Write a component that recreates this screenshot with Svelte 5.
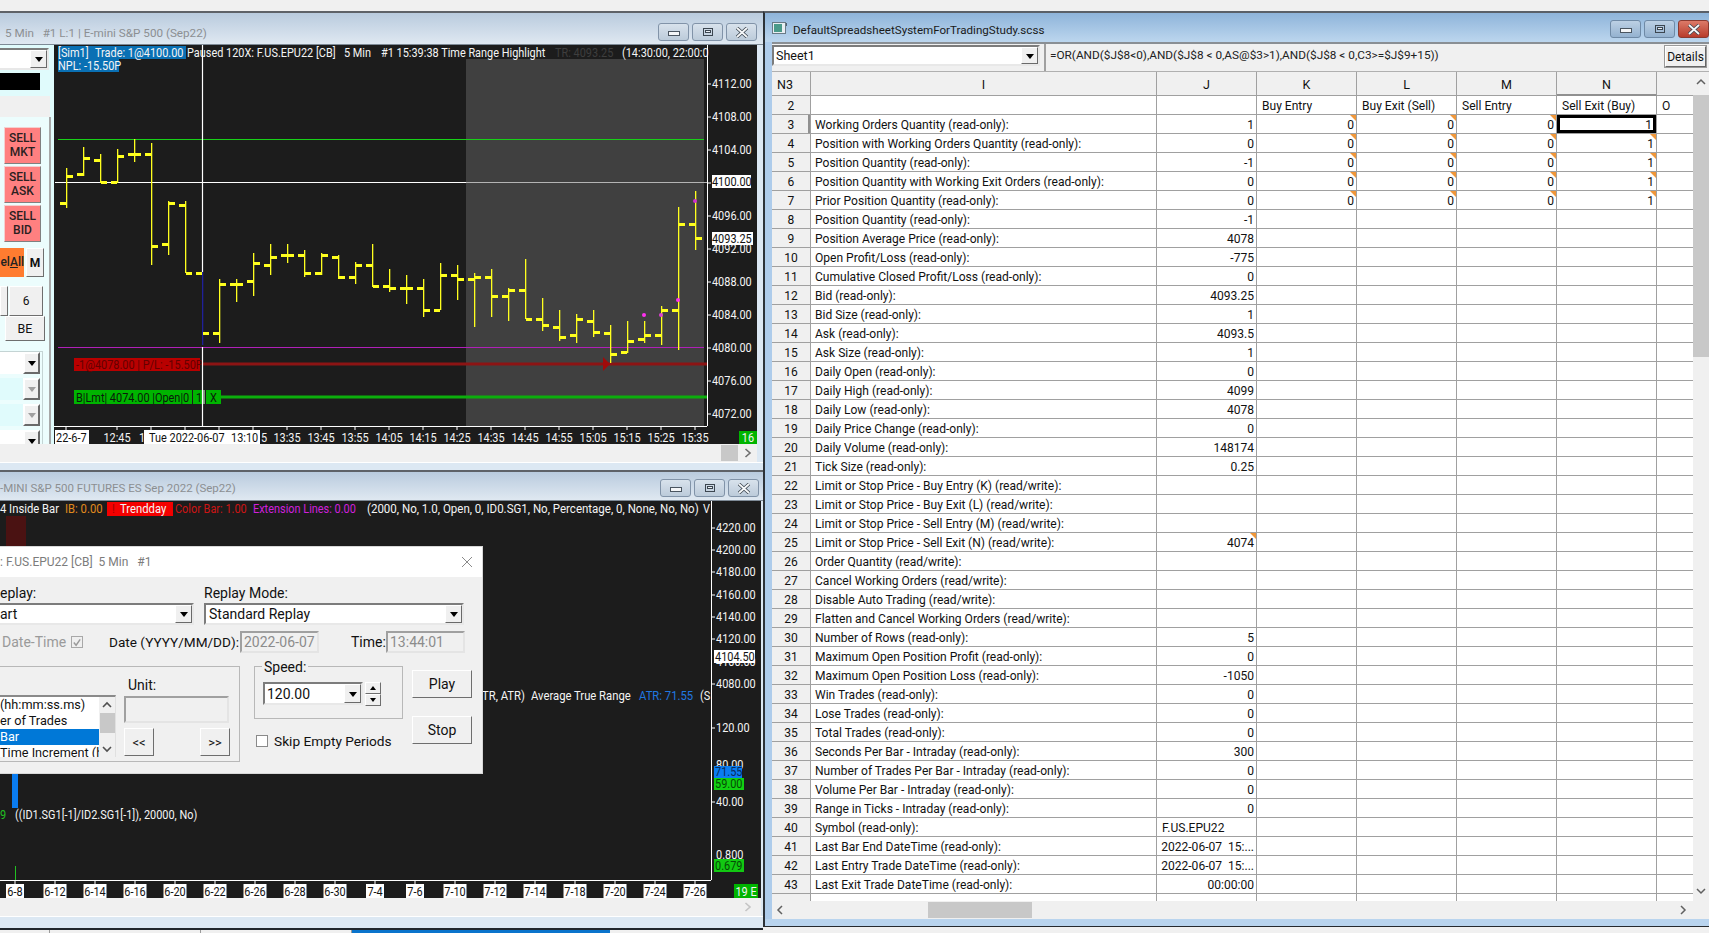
<script>
  // [high y, low y, open tick y, close tick y], page pixel coords, 17px per bar from x=66
  const bars = [
    [168, 208, 203, 176], [147, 176, 174, 158], [154, 183, 160, 182], [149, 183, 182, 156],
    [139, 162, 154, 154], [143, 265, 154, 246], [201, 255, 244, 203], [201, 273, 205, 273],
    [272, 345, 273, 333], [279, 343, 333, 284], [279, 302, 284, 284], [253, 296, 281, 263],
    [244, 275, 265, 257], [244, 263, 255, 255], [250, 277, 255, 273], [253, 275, 273, 255],
    [255, 279, 257, 277], [262, 284, 277, 265], [244, 287, 265, 286], [269, 292, 286, 288],
    [275, 304, 288, 288], [279, 317, 288, 310], [263, 310, 310, 275], [265, 300, 275, 279],
    [273, 327, 279, 277], [269, 317, 277, 296], [288, 321, 296, 290], [259, 319, 290, 319],
    [298, 331, 319, 325], [310, 341, 327, 337], [314, 343, 335, 319], [310, 337, 321, 332],
    [325, 363, 333, 354], [321, 353, 352, 341], [321, 343, 339, 335], [306, 345, 335, 310],
    [207, 350, 310, 224], [191, 250, 224, 238]
  ];
  const barX = (i) => 66 + 17 * i;

  const prices = [
    ["4112.00", 84], ["4108.00", 117], ["4104.00", 150], ["4096.00", 216], ["4092.00", 249],
    ["4088.00", 282], ["4084.00", 315], ["4080.00", 348], ["4076.00", 381], ["4072.00", 414]
  ];
  const times = [
    ["13:35", 287], ["13:45", 321], ["13:55", 355], ["14:05", 389], ["14:15", 423], ["14:25", 457],
    ["14:35", 491], ["14:45", 525], ["14:55", 559], ["15:05", 593], ["15:15", 627], ["15:25", 661], ["15:35", 695]
  ];
  const timeTicks = [66, 117, 151, 185, 219, 253, ...times.map((t) => t[1])];

  const prices2 = [
    ["4220.00", 528], ["4200.00", 550], ["4180.00", 572], ["4160.00", 595], ["4140.00", 617],
    ["4120.00", 639], ["4080.00", 684], ["120.00", 728], ["40.00", 802]
  ];
  const dates = ["6-8", "6-12", "6-14", "6-16", "6-20", "6-22", "6-26", "6-28", "6-30", "7-4", "7-6", "7-10", "7-12", "7-14", "7-18", "7-20", "7-24", "7-26"];

  const ro = " (read-only):";
  const rw = " (read/write):";
  const rows = [
    [3, "Working Orders Quantity" + ro, "1"], [4, "Position with Working Orders Quantity" + ro, "0"],
    [5, "Position Quantity" + ro, "-1"], [6, "Position Quantity with Working Exit Orders" + ro, "0"],
    [7, "Prior Position Quantity" + ro, "0"], [8, "Position Quantity" + ro, "-1"],
    [9, "Position Average Price" + ro, "4078"], [10, "Open Profit/Loss" + ro, "-775"],
    [11, "Cumulative Closed Profit/Loss" + ro, "0"], [12, "Bid" + ro, "4093.25"],
    [13, "Bid Size" + ro, "1"], [14, "Ask" + ro, "4093.5"], [15, "Ask Size" + ro, "1"],
    [16, "Daily Open" + ro, "0"], [17, "Daily High" + ro, "4099"], [18, "Daily Low" + ro, "4078"],
    [19, "Daily Price Change" + ro, "0"], [20, "Daily Volume" + ro, "148174"], [21, "Tick Size" + ro, "0.25"],
    [22, "Limit or Stop Price - Buy Entry (K)" + rw, ""], [23, "Limit or Stop Price - Buy Exit (L)" + rw, ""],
    [24, "Limit or Stop Price - Sell Entry (M)" + rw, ""], [25, "Limit or Stop Price - Sell Exit (N)" + rw, "4074"],
    [26, "Order Quantity" + rw, ""], [27, "Cancel Working Orders" + rw, ""], [28, "Disable Auto Trading" + rw, ""],
    [29, "Flatten and Cancel Working Orders" + rw, ""], [30, "Number of Rows" + ro, "5"],
    [31, "Maximum Open Position Profit" + ro, "0"], [32, "Maximum Open Position Loss" + ro, "-1050"],
    [33, "Win Trades" + ro, "0"], [34, "Lose Trades" + ro, "0"], [35, "Total Trades" + ro, "0"],
    [36, "Seconds Per Bar - Intraday" + ro, "300"], [37, "Number of Trades Per Bar - Intraday" + ro, "0"],
    [38, "Volume Per Bar - Intraday" + ro, "0"], [39, "Range in Ticks - Intraday" + ro, "0"],
    [40, "Symbol" + ro, "F.US.EPU22"], [41, "Last Bar End DateTime" + ro, "2022-06-07  15:..."],
    [42, "Last Entry Trade DateTime" + ro, "2022-06-07  15:..."], [43, "Last Exit Trade DateTime" + ro, "00:00:00"],
    ["", "", ""]
  ];
</script>

{#snippet winButtons(active)}
  <div class="winbtns">
    <span class="wb"><svg width="14" height="10" viewBox="0 0 14 10"><rect x="1.5" y="4.5" width="11" height="4" fill="#f4f6f8" stroke="#4a5560"/></svg></span>
    <span class="wb"><svg width="14" height="10" viewBox="0 0 14 10"><rect x="2.5" y="1.5" width="9" height="7" fill="none" stroke="#3c4650"/><rect x="4.5" y="3.5" width="5" height="2" fill="#eef2f6" stroke="#3c4650"/></svg></span>
    <span class="wb" class:red={active}><svg width="14" height="11" viewBox="0 0 14 11"><path d="M2 1 L12 10 M12 1 L2 10" stroke="#3c4650" stroke-width="3.4"/><path d="M2 1 L12 10 M12 1 L2 10" stroke="#f6f8fa" stroke-width="1.8"/></svg></span>
  </div>
{/snippet}

{#snippet combo(text, cls = "", disabled = false)}
  <div class="combo {cls}">
    <span class="combo-text">{text}</span>
    <i class="arrow" class:off={disabled}></i>
  </div>
{/snippet}

<div class="desk">
  <div class="strip"></div>
  <div class="main">
    <div class="leftcol">
      <!-- intraday chart -->
      <section class="win win1">
        <header class="title">
          <span class="title-text">5 Min&nbsp;&nbsp; #1 L:1 | E-mini S&amp;P 500 (Sep22)</span>
          {@render winButtons(false)}
        </header>
        <div class="win1-body">
          <aside class="panel">
            {@render combo("", "p-top")}
            <div class="blackbar"></div>
            <div class="graybar"></div>
            <div class="tradebox">
              <div class="sell">SELL<br />MKT</div>
              <div class="sell">SELL<br />ASK</div>
              <div class="sell">SELL<br />BID</div>
              <div class="btnrow1">
                <div class="cancel">el<u>A</u>ll</div>
                <div class="bevel m">M</div>
              </div>
              <div class="btnrow2">
                <div class="bevel stub"></div>
                <div class="bevel six">6</div>
              </div>
              <div class="bevel be">BE</div>
              <div class="combos">
                {@render combo("", "p-c white")}
                {@render combo("", "p-c", true)}
                {@render combo("", "p-c", true)}
                {@render combo("", "p-c white")}
              </div>
            </div>
          </aside>
          <svg class="chart" width="703" height="399" viewBox="54 45 703 399">
            <rect x="54" y="45" width="703" height="399" fill="#1c1c1c" />
            <rect x="466" y="59" width="238" height="367" fill="#404040" />

            <line x1="58" x2="704" y1="139.5" y2="139.5" stroke="#18d018" />
            <line x1="55" x2="466" y1="182.5" y2="182.5" stroke="#fff" />
            <line x1="466" x2="707" y1="182.5" y2="182.5" stroke="#b4b4b4" />
            <line x1="58" x2="704" y1="347.5" y2="347.5" stroke="#b020b8" />
            <line x1="202" x2="707" y1="364" y2="364" stroke="#8c1414" stroke-width="3" />
            <line x1="221" x2="707" y1="397" y2="397" stroke="#0cae0c" stroke-width="3" />

            {#each bars as b, i}
              {@const x = barX(i)}
              <g fill={i === 8 ? "#20209a" : "#ffff1e"}>
                <rect x={x} y={b[0]} width="1.3" height={b[1] - b[0]} />
              </g>
              <g fill="#ffff1e">
                <rect x={x - 6} y={b[2] - 1} width="6" height="3" />
                <rect x={x + 1} y={b[3] - 1} width="6" height="3" />
              </g>
            {/each}

            <circle cx="695" cy="201" r="2" fill="#d030d0" />
            <circle cx="678" cy="300" r="2" fill="#ff30f0" />
            <circle cx="644" cy="315" r="2" fill="#ff30f0" />
            <circle cx="661" cy="315" r="2" fill="#e040d0" />
            <path d="M603 357 L610 364 L603 371 Z" fill="#a00a0a" />

            <!-- order labels -->
            <rect x="74" y="358" width="126" height="13" fill="#b80000" />
            <text x="76" y="369" class="t" style="fill:#640000">-1@4078.00 | P/L: -15.50P</text>
            <rect x="74" y="390" width="147" height="14" fill="#00b400" />
            <text x="76" y="402" class="t" style="fill:#0a1a0a">B|Lmt| 4074.00 |Open|0</text>
            <rect x="192" y="390" width="1" height="14" fill="#1c1c1c" />
            <rect x="202" y="390" width="3" height="14" fill="#7a9a7a" />
            <rect x="205" y="390" width="1" height="14" fill="#1c1c1c" />
            <text x="196" y="402" class="t" style="fill:#0a1a0a">1</text>
            <text x="210" y="402" class="t" style="fill:#0a1a0a">X</text>

            <!-- header texts -->
            <rect x="58" y="46" width="128" height="13" fill="#0a70b4" />
            <rect x="58" y="59" width="61" height="13" fill="#0a70b4" />
            <text x="58" y="57" class="t">[Sim1]</text>
            <text x="95" y="57" class="t">Trade: 1@4100.00</text>
            <text x="58" y="70" class="t">NPL: -15.50P</text>
            <text x="187" y="57" class="t">Paused 120X: F.US.EPU22 [CB]</text>
            <text x="344" y="57" class="t">5 Min</text>
            <text x="381" y="57" class="t">#1 15:39:38 Time Range Highlight</text>
            <text x="555" y="57" class="t" style="fill:#3e3e3e">TR: 4093.25</text>
            <text x="622" y="57" class="t">(14:30:00, 22:00:0</text>

            <line x1="202.5" x2="202.5" y1="45" y2="272" stroke="#fff" stroke-width="1.2" />
            <line x1="202.5" x2="202.5" y1="347" y2="426" stroke="#fff" stroke-width="1.2" />

            <!-- price axis -->
            <line x1="707.5" x2="707.5" y1="45" y2="426" stroke="#fff" />
            {#each prices as p}
              <line x1="707" x2="711" y1={p[1]} y2={p[1]} stroke="#fff" />
              <text x="712" y={p[1] + 4.5} class="t">{p[0]}</text>
            {/each}
            <line x1="707" x2="711" y1="183" y2="183" stroke="#fff" />
            <rect x="712" y="175" width="39" height="13" fill="#fff" />
            <text x="712" y="186" class="t dark">4100.00</text>
            <rect x="712" y="232" width="41" height="13" fill="#fff" />
            <text x="712" y="243" class="t dark">4093.25</text>

            <!-- time axis -->
            <line x1="54" x2="707" y1="426.5" y2="426.5" stroke="#fff" />
            {#each timeTicks as x}
              <line x1={x} x2={x} y1="426" y2="430" stroke="#fff" />
            {/each}
            <rect x="55" y="430" width="34" height="14" fill="#fff" />
            <text x="56" y="442" class="t dark">22-6-7</text>
            <text x="117" y="442" class="t c" text-anchor="middle">12:45</text>
            <text x="139" y="442" class="t">1</text>
            <text x="261" y="442" class="t">5</text>
            <rect x="144" y="430" width="116" height="14" fill="#fff" />
            <text x="149" y="442" class="t dark">Tue 2022-06-07</text>
            <text x="231" y="442" class="t dark">13:10</text>
            {#each times as t}
              <text x={t[1]} y="442" class="t c" text-anchor="middle">{t[0]}</text>
            {/each}
            <rect x="739" y="431" width="18" height="13" fill="#00b400" />
            <text x="748" y="442" class="t c" text-anchor="middle">16</text>
          </svg>
        </div>
        <div class="hscroll s1">
          <span class="thumb1"></span>
          <svg class="chev" width="8" height="10" viewBox="0 0 8 10"><path d="M1.5 1 L6 5 L1.5 9" fill="none" stroke="#707070" stroke-width="1.6" /></svg>
        </div>
        <div class="frame-bottom"></div>
      </section>

      <!-- daily chart with replay dialog on top -->
      <section class="win win2">
        <header class="title t2">
          <span class="title-text">-MINI S&amp;P 500 FUTURES ES Sep 2022 (Sep22)</span>
          {@render winButtons(false)}
        </header>
        <svg class="chart" width="761" height="397" viewBox="0 501 761 397">
          <rect x="0" y="501" width="761" height="397" fill="#1c1c1c" />
          <rect x="6" y="516" width="20" height="30" fill="#4a1212" />
          <rect x="12" y="773" width="6" height="35" fill="#0a7cf0" />
          <line x1="15.5" x2="15.5" y1="866" y2="880" stroke="#22c022" />

          <text x="0" y="513" class="t h94">4 Inside Bar</text>
          <text x="65" y="513" class="t h94" style="fill:#e08a1c">IB: 0.00</text>
          <rect x="107" y="502" width="66" height="14" fill="#f40000" />
          <text x="112" y="513" class="t" style="fill:#a00000">!</text>
          <text x="120" y="513" class="t h94">Trendday</text>
          <text x="175" y="513" class="t" style="fill:#cc1414">Color Bar: 1.00</text>
          <text x="253" y="513" class="t" style="fill:#d020dc">Extension Lines: 0.00</text>
          <text x="367" y="513" class="t h96">(2000, No, 1.0, Open, 0, ID0.SG1, No, Percentage, 0, None, No, No)</text>
          <text x="703" y="513" class="t">V</text>

          <text x="482" y="700" class="t h94">TR, ATR)</text>
          <text x="531" y="700" class="t h94">Average True Range</text>
          <text x="639" y="700" class="t h94" style="fill:#2078e0">ATR: 71.55</text>
          <text x="700" y="700" class="t">(S</text>
          <text x="0" y="819" class="t" style="fill:#22c022">9</text>
          <text x="15" y="819" class="t">((ID1.SG1[-1]/ID2.SG1[-1]), 20000, No)</text>

          <line x1="711.5" x2="711.5" y1="501" y2="880" stroke="#fff" />
          <line x1="0" x2="711" y1="880.5" y2="880.5" stroke="#fff" />
          {#each prices2 as p}
            <line x1="711" x2="715" y1={p[1]} y2={p[1]} stroke="#fff" />
            <text x="716" y={p[1] + 4.5} class="t">{p[0]}</text>
          {/each}
          <text x="716" y="666" class="t">4100.00</text>
          <rect x="714" y="650" width="41" height="13" fill="#fff" />
          <text x="715" y="661" class="t dark">4104.50</text>

          <text x="716" y="769" class="t">80.00</text>
          <rect x="714" y="766" width="28" height="12" fill="#0a7cf0" />
          <text x="715" y="776" class="t" style="fill:#0a2a5a">71.55</text>
          <rect x="714" y="778" width="30" height="12" fill="#12d012" />
          <text x="715" y="788" class="t" style="fill:#064a06">59.00</text>
          <text x="716" y="859" class="t">0.800</text>
          <rect x="714" y="859" width="30" height="13" fill="#12c812" />
          <text x="715" y="870" class="t" style="fill:#064a06">0.679</text>

          {#each dates as d, i}
            {@const x = 15 + 40 * i}
            {@const w = d.length > 3 ? 23 : 18}
            <line x1={x} x2={x} y1="880" y2="884" stroke="#fff" />
            <rect x={x - w / 2} y="884" width={w} height="14" fill="#fff" />
            <text x={x} y="896" class="t dark c" text-anchor="middle">{d}</text>
          {/each}
          <rect x="734" y="884" width="24" height="14" fill="#00b400" />
          <text x="746" y="896" class="t c" text-anchor="middle">19 E</text>
        </svg>
        <div class="hscroll s2">
          <svg class="chev" width="8" height="10" viewBox="0 0 8 10"><path d="M1.5 1 L6 5 L1.5 9" fill="none" stroke="#c4c4c4" stroke-width="1.6" /></svg>
        </div>
        <div class="frame-bottom"></div>

        <div class="dialog">
          <div class="dlg-title">
            <span>: F.US.EPU22 [CB]&nbsp; 5 Min&nbsp;&nbsp; #1</span>
            <svg width="12" height="12" viewBox="0 0 12 12"><path d="M1 1 L11 11 M11 1 L1 11" stroke="#8a8a8a" stroke-width="1" /></svg>
          </div>
          <div class="dlg-body">
            <div class="d-row1">
              <div class="d-col c1">
                <label>eplay:</label>
                {@render combo("art", "d-combo")}
              </div>
              <div class="d-col c2">
                <label>Replay Mode:</label>
                {@render combo("Standard Replay", "d-combo pad")}
              </div>
            </div>

            <div class="d-row2">
              <span class="muted dt">Date-Time</span>
              <span class="check checked"><svg width="11" height="11" viewBox="0 0 11 11"><path d="M2 5.5 L4.5 8.5 L9 2" fill="none" stroke="#9a9a9a" stroke-width="1.6" /></svg></span>
              <span class="lab-date">Date (YYYY/MM/DD):</span>
              <span class="inp w-date">2022-06-07</span>
              <span class="lab-time">Time:</span>
              <span class="inp w-time">13:44:01</span>
            </div>

            <div class="d-row3">
              <div class="group g1">
                <div class="listbox">
                  <div class="items">
                    <div>(hh:mm:ss.ms)</div>
                    <div>er of Trades</div>
                    <div class="sel">Bar</div>
                    <div>Time Increment (h</div>
                  </div>
                  <div class="vs">
                    <svg width="10" height="7" viewBox="0 0 10 7"><path d="M1 6 L5 2 L9 6" fill="none" stroke="#505050" stroke-width="1.6" /></svg>
                    <span class="vs-thumb"></span>
                    <svg width="10" height="7" viewBox="0 0 10 7"><path d="M1 1 L5 5 L9 1" fill="none" stroke="#505050" stroke-width="1.6" /></svg>
                  </div>
                </div>
                <div class="unit">
                  <div class="unit-label">Unit:</div>
                  <div class="inp unit-inp"></div>
                  <div class="nav">
                    <div class="bevel navb">&lt;&lt;</div>
                    <div class="bevel navb">&gt;&gt;</div>
                  </div>
                </div>
              </div>

              <div class="mid">
                <div class="group g2">
                  <span class="legend">Speed:</span>
                  {@render combo("120.00", "speed")}
                  <div class="spin">
                    <span class="bevel spinb"><i class="up"></i></span>
                    <span class="bevel spinb"><i class="down"></i></span>
                  </div>
                </div>
                <div class="skip">
                  <span class="check"></span>
                  <span>Skip Empty Periods</span>
                </div>
              </div>

              <div class="actions">
                <div class="bevel act">Play</div>
                <div class="bevel act">Stop</div>
              </div>
            </div>
          </div>
        </div>
      </section>
    </div>

    <!-- spreadsheet window -->
    <section class="sheetwin">
      <header class="title active">
        <svg class="appicon" width="16" height="14" viewBox="0 0 16 14">
          <rect x="0.5" y="1.5" width="13" height="11" fill="#e8eef2" stroke="#6a7a86" />
          <rect x="2" y="3" width="8" height="8" fill="#4a9a8a" />
          <rect x="14" y="2" width="1" height="3" fill="#506070" />
        </svg>
        <span class="title-text dark">DefaultSpreadsheetSystemForTradingStudy.scss</span>
        {@render winButtons(true)}
      </header>
      <div class="sheet-inner">
        <div class="fbar">
          {@render combo("Sheet1", "sheetcombo")}
          <div class="formula">=OR(AND($J$8&lt;0),AND($J$8 &lt; 0,AS@$3&gt;1),AND($J$8 &lt; 0,C3&gt;=$J$9+15))</div>
          <div class="details">Details</div>
        </div>
        <div class="gridwrap">
          <div class="gridclip">
            <table>
              <colgroup>
                <col style="width:39px" /><col style="width:346px" /><col style="width:100px" />
                <col style="width:100px" /><col style="width:100px" /><col style="width:100px" />
                <col style="width:100px" /><col style="width:36px" />
              </colgroup>
              <thead>
                <tr>
                  <th class="corner">N3</th>
                  <th>I</th><th>J</th><th>K</th><th>L</th><th>M</th><th class="selcol">N</th><th></th>
                </tr>
              </thead>
              <tbody>
                <tr>
                  <td class="rh">2</td><td></td><td></td>
                  <td>Buy Entry</td><td>Buy Exit (Sell)</td><td>Sell Entry</td><td>Sell Exit (Buy)</td><td>O</td>
                </tr>
                {#each rows as r}
                  <tr>
                    <td class="rh" class:selrow={r[0] === 3}>{r[0]}</td>
                    <td class="lbl">{r[1]}</td>
                    <td class="pre" class:num={r[0] !== 40} class:note={r[0] === 25}>{r[2]}</td>
                    {#if r[0] >= 3 && r[0] <= 7}
                      <td class="num note">0</td>
                      <td class="num note">0</td>
                      <td class="num note">0</td>
                      <td class="num note" class:cur={r[0] === 3}>1</td>
                    {:else}
                      <td></td><td></td><td></td><td></td>
                    {/if}
                    <td></td>
                  </tr>
                {/each}
              </tbody>
            </table>
          </div>
          <div class="vscroll">
            <svg width="10" height="7" viewBox="0 0 10 7"><path d="M1 6 L5 2 L9 6" fill="none" stroke="#606060" stroke-width="1.5" /></svg>
            <span class="v-thumb"></span>
            <svg width="10" height="7" viewBox="0 0 10 7"><path d="M1 1 L5 5 L9 1" fill="none" stroke="#606060" stroke-width="1.5" /></svg>
          </div>
        </div>
        <div class="hscroll s3">
          <svg width="8" height="10" viewBox="0 0 8 10"><path d="M6 1 L2 5 L6 9" fill="none" stroke="#606060" stroke-width="1.5" /></svg>
          <span class="h-thumb"></span>
          <svg width="8" height="10" viewBox="0 0 8 10"><path d="M2 1 L6 5 L2 9" fill="none" stroke="#606060" stroke-width="1.5" /></svg>
        </div>
      </div>
      <div class="frame-bottom active"></div>
    </section>
  </div>

  <div class="taskbar">
    <span class="task w50"></span>
    <span class="task w151"></span>
    <span class="task w151"></span>
    <span class="task on"></span>
  </div>
</div>

<style>
  :global(body) {
    margin: 0;
    background: #f0f0f0;
  }
  .desk {
    width: 1709px;
    height: 933px;
    overflow: hidden;
    position: relative;
    display: flex;
    flex-direction: column;
    background: #f0f0f0;
    font-family: Roboto, "Liberation Sans", sans-serif;
    font-size: 12px;
    color: #111;
  }
  .strip {
    height: 11px;
    flex: none;
    background: #f0f0f0;
  }
  .main {
    display: flex;
    height: 915px;
    flex: none;
  }
  .leftcol {
    width: 763px;
    flex: none;
    display: flex;
    flex-direction: column;
  }
  .win {
    position: relative;
    background: #dce8f3;
    border-top: 2px solid #5e6268;
    overflow: hidden;
  }
  .win1 {
    height: 457px;
    flex: none;
  }
  .win2 {
    height: 456px;
    flex: none;
    border-bottom: 2px solid #20262c;
  }
  .title {
    display: flex;
    align-items: center;
    height: 32px;
    background: linear-gradient(#b9cbde, #dfe8f1);
    border-bottom: 1px solid #7e8a96;
    box-sizing: border-box;
  }
  .t2 {
    height: 29px;
  }
  .title-text {
    flex: 1;
    padding: 8px 0 0 5px;
    font-size: 11.7px;
    color: #8c8f92;
    white-space: nowrap;
  }
  .t2 .title-text {
    padding: 4px 0 0 0;
    font-size: 11.5px;
  }
  .title-text.dark {
    color: #1a1a1a;
    padding: 5px 0 0 5px;
    font-size: 11.6px;
  }
  .winbtns {
    display: flex;
    gap: 3px;
    margin-right: 6px;
    margin-top: 7px;
  }
  .t2 .winbtns {
    margin-right: 4px;
    margin-top: 4px;
  }
  .wb {
    width: 31px;
    height: 18px;
    box-sizing: border-box;
    display: flex;
    align-items: center;
    justify-content: center;
    border: 1px solid #8193a8;
    border-radius: 3px;
    background: linear-gradient(#d8e2ec, #bccbda);
  }
  .wb.red {
    background: linear-gradient(#dc7a68, #b83c2c);
    border-color: #8a3a30;
  }
  .active .wb {
    background: linear-gradient(#bcd0e4, #94b2d0);
    border-color: #6f8aa6;
  }
  .active .wb.red {
    background: linear-gradient(#dc7a68, #b83c2c);
    border-color: #8a3a30;
  }
  .win1-body {
    display: flex;
    height: 399px;
  }
  .chart {
    display: block;
    flex: none;
    font-family: Roboto, "Liberation Sans", sans-serif;
  }
  /* chart font is tall and narrow, so squeeze it a little */
  .t {
    font-size: 12px;
    fill: #f4f4f4;
    transform-box: fill-box;
    transform-origin: 0 50%;
    transform: scaleX(0.91);
  }
  .t.c {
    transform-origin: 50% 50%;
  }
  .t.h94 {
    transform: scaleX(0.94);
  }
  .t.h96 {
    transform: scaleX(0.96);
  }
  .t.dark {
    fill: #111;
  }

  /* left trade panel, its left side is cut by the window */
  .panel {
    width: 54px;
    flex: none;
    background: #e0fbfc;
    display: flex;
    flex-direction: column;
    overflow: hidden;
    padding-top: 3px;
    box-sizing: border-box;
  }
  .combo {
    display: flex;
    align-items: stretch;
    background: #fff;
    box-sizing: border-box;
    border: 2px solid;
    border-color: #7c7c7c #e8e8e8 #e8e8e8 #7c7c7c;
  }
  .combo-text {
    flex: 1;
    white-space: nowrap;
    overflow: hidden;
    align-self: center;
  }
  .arrow {
    width: 17px;
    flex: none;
    box-sizing: border-box;
    background: #f0f0f0;
    border: 1px solid;
    border-color: #fff #6a6a6a #6a6a6a #fff;
    position: relative;
  }
  .arrow::after {
    content: "";
    position: absolute;
    left: 50%;
    top: 50%;
    margin: -2px 0 0 -4px;
    border: 4px solid transparent;
    border-top: 5px solid #000;
    border-bottom: 0;
  }
  .arrow.off::after {
    border-top-color: #a0a0a0;
  }
  .p-top {
    height: 22px;
    width: 49px;
    flex: none;
    border-left: 0;
  }
  .blackbar {
    height: 17px;
    width: 40px;
    margin-top: 3px;
    background: #000;
    flex: none;
  }
  .graybar {
    height: 21px;
    width: 50px;
    margin-top: 6px;
    background: #f0f0f0;
    flex: none;
  }
  .tradebox {
    width: 51px;
    box-sizing: border-box;
    flex: 1;
    border-right: 2px solid #a8a8a8;
    background: #ecfdfd;
    padding-top: 10px;
    display: flex;
    flex-direction: column;
  }
  .sell {
    width: 37px;
    height: 37px;
    margin: 0 0 2px 4px;
    box-sizing: border-box;
    background: #ff8080;
    border: 1px solid;
    border-color: #f4d0d0 #808080 #808080 #f4d0d0;
    text-align: center;
    font-size: 12px;
    font-weight: 500;
    line-height: 14px;
    padding-top: 3px;
    color: #2a2020;
  }
  .bevel {
    background: #f0f0f0;
    box-sizing: border-box;
    border: 1px solid;
    border-color: #fff #6e6e6e #6e6e6e #fff;
    display: flex;
    align-items: center;
    justify-content: center;
  }
  .btnrow1 {
    display: flex;
    margin-top: 4px;
    height: 29px;
    gap: 2px;
  }
  .cancel {
    width: 24px;
    background: #ff7c30;
    font-size: 12px;
    font-weight: 500;
    text-align: right;
    line-height: 29px;
    overflow: hidden;
    color: #222;
  }
  .m {
    width: 18px;
    font-weight: 700;
    font-size: 12px;
  }
  .btnrow2 {
    display: flex;
    margin-top: 9px;
    height: 30px;
    gap: 1px;
  }
  .stub {
    width: 8px;
  }
  .six {
    width: 34px;
    font-size: 12px;
  }
  .be {
    width: 40px;
    height: 25px;
    margin: 0 0 0 5px;
    font-size: 12.5px;
  }
  .combos {
    margin-top: 10px;
    width: 42px;
    border-right: 1px solid #c4d4d4;
    border-top: 1px solid #c4d4d4;
    display: flex;
    flex-direction: column;
    gap: 4px;
    flex: 1;
  }
  .p-c {
    height: 22px;
    flex: none;
    width: 40px;
    border: 0;
    background: #e0fbfc;
    justify-content: flex-end;
  }
  .p-c.white {
    background: #fff;
  }
  .p-c .arrow {
    border-width: 2px;
  }

  .hscroll {
    height: 18px;
    background: #f0f0f0;
    display: flex;
    align-items: center;
  }
  .s1,
  .s2 {
    width: 757px;
    justify-content: flex-end;
    box-sizing: border-box;
    padding-right: 5px;
  }
  .s2 {
    width: 761px;
    padding-right: 9px;
  }
  .thumb1 {
    width: 17px;
    height: 16px;
    background: #c8c8c8;
    margin-right: 6px;
  }
  .frame-bottom {
    height: 8px;
    background: #dce8f3;
    border-top: 1px solid #fff;
    box-sizing: border-box;
  }

  /* replay dialog */
  .dialog {
    position: absolute;
    left: 0;
    top: 75px;
    width: 482px;
    height: 226px;
    background: #f0f0f0;
    overflow: hidden;
    font-size: 14px;
    box-shadow: 0 0 0 1px #d8d8d8;
    display: flex;
    flex-direction: column;
  }
  .dlg-title {
    height: 30px;
    flex: none;
    background: #fff;
    color: #7c7c7c;
    display: flex;
    align-items: center;
    justify-content: space-between;
    padding-right: 9px;
    font-size: 12px;
  }
  .dlg-body {
    padding-top: 7px;
    display: flex;
    flex-direction: column;
  }
  .d-row1 {
    display: flex;
    gap: 10px;
  }
  .d-col label {
    display: block;
    height: 19px;
    line-height: 18px;
  }
  .c1 {
    width: 194px;
  }
  .c2 {
    width: 260px;
  }
  .d-combo {
    height: 22px;
  }
  .c1 .d-combo {
    border-left: 0;
  }
  .d-combo.pad .combo-text {
    padding-left: 3px;
  }
  .d-row2 {
    display: flex;
    align-items: center;
    height: 22px;
    margin-top: 6px;
  }
  .muted {
    color: #9a9a9a;
  }
  .dt {
    margin-left: 2px;
    width: 69px;
  }
  .check {
    width: 12px;
    height: 12px;
    flex: none;
    box-sizing: border-box;
    border: 1px solid #8a8a8a;
    background: #fff;
    display: inline-flex;
  }
  .check.checked {
    background: #efefef;
    border-color: #a8a8a8;
  }
  .lab-date {
    margin-left: 26px;
    width: 131px;
    white-space: nowrap;
    font-size: 13.6px;
  }
  .inp {
    box-sizing: border-box;
    border: 2px solid;
    border-color: #a0a0a0 #e4e4e4 #e4e4e4 #a0a0a0;
    color: #8c8c8c;
    padding-left: 2px;
    height: 22px;
    line-height: 18px;
    display: block;
  }
  .w-date {
    width: 79px;
  }
  .lab-time {
    margin-left: 32px;
    width: 35px;
  }
  .w-time {
    width: 79px;
  }
  .d-row3 {
    display: flex;
    margin-top: 13px;
  }
  .group {
    box-sizing: border-box;
    border: 1px solid #b8b8b8;
  }
  .g1 {
    width: 240px;
    height: 96px;
    border-left: 0;
    display: flex;
  }
  .listbox {
    width: 116px;
    height: 62px;
    margin-top: 28px;
    flex: none;
    background: #fff;
    box-sizing: border-box;
    border-top: 2px solid #8a8a8a;
    border-right: 1px solid #e0e0e0;
    display: flex;
    overflow: hidden;
  }
  .items {
    flex: 1;
    min-width: 0;
    line-height: 16px;
    font-size: 12.7px;
    white-space: nowrap;
    overflow: hidden;
  }
  .items .sel {
    background: #0078d7;
    color: #fff;
  }
  .vs {
    width: 16px;
    flex: none;
    background: #f0f0f0;
    display: flex;
    flex-direction: column;
    align-items: center;
    justify-content: space-between;
    padding: 4px 0;
    box-sizing: border-box;
  }
  .vs-thumb {
    width: 15px;
    height: 20px;
    background: #c8c8c8;
    margin-top: -8px;
  }
  .unit {
    margin-left: 8px;
    width: 106px;
  }
  .unit-label {
    margin-top: 10px;
    height: 19px;
    line-height: 17px;
    padding-left: 4px;
  }
  .unit-inp {
    height: 27px;
    width: 105px;
  }
  .nav {
    display: flex;
    justify-content: space-between;
    margin-top: 5px;
  }
  .navb {
    width: 30px;
    height: 28px;
    font-size: 13px;
  }
  .mid {
    margin-left: 14px;
    width: 149px;
  }
  .g2 {
    position: relative;
    height: 53px;
    display: flex;
    align-items: flex-start;
    padding: 15px 0 0 8px;
  }
  .legend {
    position: absolute;
    left: 7px;
    top: -8px;
    background: #f0f0f0;
    padding: 0 2px;
    line-height: 16px;
  }
  .speed {
    width: 100px;
    height: 23px;
  }
  .speed .combo-text {
    padding-left: 2px;
  }
  .spin {
    margin-left: 2px;
    display: flex;
    flex-direction: column;
  }
  .spinb {
    width: 16px;
    height: 12px;
  }
  .up {
    border: 3px solid transparent;
    border-bottom: 4px solid #000;
    border-top: 0;
  }
  .down {
    border: 3px solid transparent;
    border-top: 4px solid #000;
    border-bottom: 0;
  }
  .skip {
    display: flex;
    align-items: center;
    gap: 6px;
    margin: 14px 0 0 2px;
    white-space: nowrap;
    font-size: 13.7px;
  }
  .actions {
    margin-left: 9px;
    padding-top: 4px;
    display: flex;
    flex-direction: column;
    gap: 18px;
  }
  .act {
    width: 60px;
    height: 28px;
  }

  /* spreadsheet */
  .sheetwin {
    flex: 1;
    min-width: 0;
    background: #aecceb;
    border-top: 2px solid #5a6068;
    border-left: 2px solid #2c3238;
    display: flex;
    flex-direction: column;
    height: 915px;
    box-sizing: border-box;
  }
  .title.active {
    height: 29px;
    background: linear-gradient(#8eb4da, #bcd6ee);
    border-bottom: 0;
    padding-left: 7px;
    flex: none;
  }
  .title.active .winbtns {
    margin-right: 0;
    margin-top: 3px;
  }
  .sheet-inner {
    margin-left: 7px;
    border-top: 2px solid #8a8f94;
    background: #f0f0f0;
    flex: none;
    height: 875px;
    display: flex;
    flex-direction: column;
  }
  .fbar {
    display: flex;
    height: 27px;
    flex: none;
    align-items: flex-start;
    gap: 4px;
  }
  .sheetcombo {
    width: 268px;
    height: 21px;
    font-size: 12.5px;
    margin-top: 1px;
  }
  .sheetcombo .combo-text {
    padding-left: 2px;
  }
  .formula {
    flex: 1;
    height: 27px;
    line-height: 22px;
    border-left: 2px solid #a0a0a0;
    padding-left: 4px;
    font-size: 11.8px;
    white-space: nowrap;
    color: #222;
  }
  .details {
    width: 41px;
    height: 21px;
    line-height: 20px;
    margin-top: 2px;
    box-sizing: border-box;
    border: 1px solid;
    border-color: #fff #666 #666 #fff;
    outline: 1px solid #999;
    text-align: center;
    margin-right: 3px;
  }
  .gridwrap {
    display: flex;
    flex: 1;
    min-height: 0;
    border-top: 1px solid #b0b0b0;
  }
  .gridclip {
    width: 921px;
    flex: none;
    overflow: hidden;
    background: #fff;
  }
  table {
    table-layout: fixed;
    width: 921px;
    border-collapse: separate;
    border-spacing: 0;
    font-size: 12.05px;
  }
  th {
    height: 24px;
    box-sizing: border-box;
    background: #f0f0f0;
    font-weight: 400;
    padding: 2px 0 0;
    border-right: 1px solid #a0a0a0;
    border-bottom: 1px solid #a0a0a0;
    font-size: 12.5px;
  }
  th.corner {
    text-align: left;
    padding-left: 5px;
  }
  th.selcol {
    border-bottom: 2px solid #909090;
  }
  th:last-child {
    border-right: 0;
  }
  td {
    height: 19px;
    box-sizing: border-box;
    padding: 2px 0 0 5px;
    border-right: 1px solid #a0a0a0;
    border-bottom: 1px solid #a0a0a0;
    white-space: nowrap;
    overflow: hidden;
    position: relative;
    line-height: 16px;
  }
  td:last-child {
    border-right: 0;
  }
  td.lbl {
    padding-left: 4px;
  }
  .rh {
    background: #f0f0f0;
    text-align: center;
    padding: 2px 0 0;
  }
  .selrow {
    box-shadow: inset -2px 0 0 #909090;
  }
  td.num {
    text-align: right;
    padding: 2px 2px 0 0;
  }
  .pre {
    white-space: pre;
  }
  .note::after {
    content: "";
    position: absolute;
    right: 0;
    top: 0;
    width: 6px;
    height: 6px;
    background: #f0973a;
    clip-path: polygon(0 0, 100% 0, 100% 100%);
  }
  td.cur {
    box-shadow: inset 0 0 0 3px #000;
    padding-right: 4px;
  }
  .cur::after {
    display: none;
  }
  .vscroll {
    width: 16px;
    flex: none;
    display: flex;
    flex-direction: column;
    align-items: center;
    position: relative;
    padding: 6px 0;
    box-sizing: border-box;
    justify-content: space-between;
  }
  .v-thumb {
    position: absolute;
    left: 0;
    top: 23px;
    width: 16px;
    height: 262px;
    background: #c8c8c8;
  }
  .s3 {
    flex: none;
    box-sizing: border-box;
    padding: 0 22px 0 4px;
    justify-content: space-between;
    position: relative;
  }
  .h-thumb {
    position: absolute;
    left: 156px;
    top: 1px;
    width: 104px;
    height: 16px;
    background: #c8c8c8;
  }
  .appicon {
    flex: none;
  }
  .frame-bottom.active {
    background: #b9d4ee;
    border-top: 0;
    height: 8px;
    flex: none;
  }

  .taskbar {
    flex: 1;
    display: flex;
    background: #f0f0f0;
    padding-top: 2px;
    border-top: 1px solid #262a2e;
    box-sizing: border-box;
  }
  .task {
    box-sizing: border-box;
    border-right: 1px solid #9a9a9a;
  }
  .w50 {
    width: 50px;
  }
  .w151 {
    width: 151px;
  }
  .on {
    width: 258px;
    background: #0a74cc;
    border: 0;
  }
</style>
